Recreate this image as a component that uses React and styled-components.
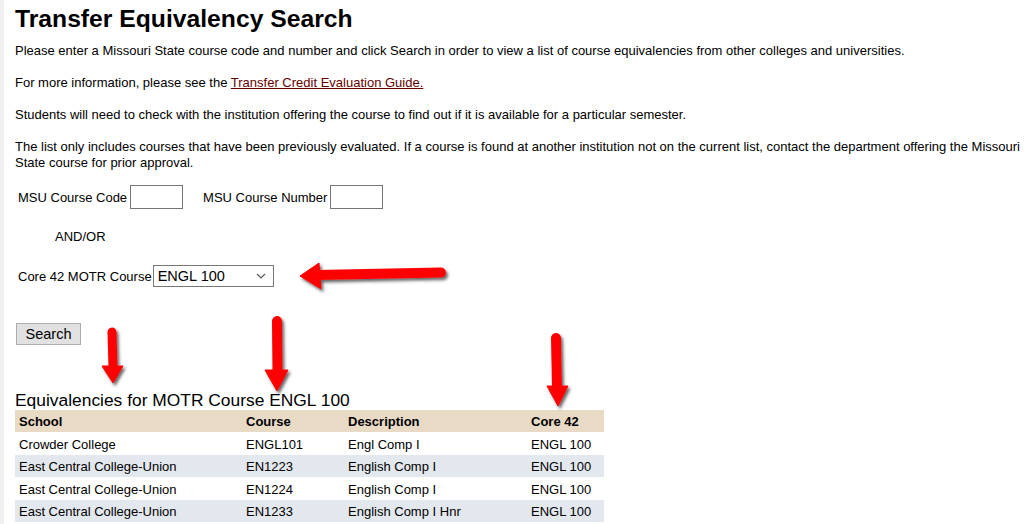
import styled, { createGlobalStyle } from "styled-components"

const GlobalStyle = createGlobalStyle`
    html, body {
        margin: 0;
        padding: 0;
        background-color: #FFFFFF;
    }
    body {
        font-family: "Liberation Sans", Arial, sans-serif;
        color: #000000;
    }
`

const rows = [
    { school: "Crowder College", course: "ENGL101", description: "Engl Comp I", core: "ENGL 100" },
    { school: "East Central College-Union", course: "EN1223", description: "English Comp I", core: "ENGL 100" },
    { school: "East Central College-Union", course: "EN1224", description: "English Comp I", core: "ENGL 100" },
    { school: "East Central College-Union", course: "EN1233", description: "English Comp I Hnr", core: "ENGL 100" },
]

const columns = ["227px", "102px", "183px", "77px"]

export default function App() {
    return (
        <>
            <GlobalStyle />
            <Page>
                <Content>
                    <Title>Transfer Equivalency Search</Title>
                    <Text>Please enter a Missouri State course code and number and click Search in order to view a list of course equivalencies from other colleges and universities.</Text>
                    <Text>For more information, please see the <a href="#guide">Transfer Credit Evaluation Guide.</a></Text>
                    <Text>Students will need to check with the institution offering the course to find out if it is available for a particular semester.</Text>
                    <Text last>The list only includes courses that have been previously evaluated. If a course is found at another institution not on the current list, contact the department offering the Missouri State course for prior approval.</Text>

                    <Form>
                        <FieldRow>
                            <label>MSU Course Code</label>
                            <TextBox />
                            <label className="second">MSU Course Number</label>
                            <TextBox />
                        </FieldRow>
                        <AndOr>AND/OR</AndOr>
                        <SelectRow>
                            <label>Core 42 MOTR Course</label>
                            <Select>
                                <span>ENGL 100</span>
                                <svg width="10" height="6" viewBox="0 0 10 6">
                                    <path d="M1 1 L5 5 L9 1" fill="none" stroke="#555" strokeWidth="1.1" />
                                </svg>
                            </Select>
                        </SelectRow>
                        <SearchButton>Search</SearchButton>
                    </Form>

                    <ResultsTitle>Equivalencies for MOTR Course ENGL 100</ResultsTitle>
                    <Table>
                        <HeadRow>
                            <Cell w={columns[0]}>School</Cell>
                            <Cell w={columns[1]}>Course</Cell>
                            <Cell w={columns[2]}>Description</Cell>
                            <Cell w={columns[3]}>Core 42</Cell>
                        </HeadRow>
                        {rows.map((r, i) => (
                            <Row key={i} alt={i % 2 === 1}>
                                <Cell w={columns[0]}>{r.school}</Cell>
                                <Cell w={columns[1]}>{r.course}</Cell>
                                <Cell w={columns[2]}>{r.description}</Cell>
                                <Cell w={columns[3]}>{r.core}</Cell>
                            </Row>
                        ))}
                    </Table>
                </Content>

                <Arrows width="1030" height="524" viewBox="0 0 1030 524">
                    <defs>
                        <filter id="shadow" x="-30%" y="-30%" width="160%" height="160%">
                            <feDropShadow dx="2" dy="2.5" stdDeviation="1.4" floodColor="#303030" floodOpacity="0.75" />
                        </filter>
                    </defs>
                    <g filter="url(#shadow)" fill="#FF0000" stroke="#FF0000">
                        <line x1="317" y1="275" x2="441" y2="272.5" strokeWidth="10" strokeLinecap="round" />
                        <polygon points="300,276 319,263 321,289" strokeWidth="1" strokeLinejoin="round" />

                        <line x1="112" y1="332" x2="113" y2="368" strokeWidth="9" strokeLinecap="round" />
                        <polygon points="102,366 123,366 113,383" strokeWidth="1" strokeLinejoin="round" />

                        <line x1="277" y1="321" x2="277.5" y2="372" strokeWidth="10" strokeLinecap="round" />
                        <polygon points="265,370 288,370 277,391" strokeWidth="1" strokeLinejoin="round" />

                        <line x1="556" y1="338" x2="557" y2="388" strokeWidth="10" strokeLinecap="round" />
                        <polygon points="547,386 568,386 558,406" strokeWidth="1" strokeLinejoin="round" />
                    </g>
                </Arrows>
            </Page>
        </>
    )
}

const Page = styled.div`
    position: relative;
    width: 1030px;
    height: 524px;
    overflow: hidden;
    border-left: 4px solid #F0F0F0;
    box-sizing: border-box;
`

const Content = styled.div`
    padding: 5px 0 0 11px;
    width: 1015px;
`

const Title = styled.h1`
    margin: 0 0 10px;
    font-size: 24.7px;
    line-height: 28px;
    font-weight: 700;
    white-space: nowrap;
`

const Text = styled.p`
    margin: 0 0 ${props => props.last ? "15px" : "16px"};
    font-size: 13px;
    line-height: 16px;
    a {
        color: #660000;
        text-decoration: underline;
    }
`

const Form = styled.div`
    display: flex;
    flex-direction: column;
    align-items: flex-start;
    font-size: 13px;
    padding-left: 3px;
`

const FieldRow = styled.div`
    display: flex;
    align-items: center;
    height: 24px;
    margin-top: -1px;
    label {
        margin-right: 3px;
    }
    .second {
        margin-left: 20px;
    }
`

const TextBox = styled.div`
    width: 51px;
    height: 22px;
    border: 1px solid #767676;
    background-color: #FFFFFF;
`

const AndOr = styled.div`
    margin: 20px 0 0 37px;
    line-height: 16px;
`

const SelectRow = styled.div`
    display: flex;
    align-items: center;
    margin-top: 20px;
    height: 22px;
    label {
        margin-right: 1px;
    }
`

const Select = styled.div`
    display: flex;
    align-items: center;
    justify-content: space-between;
    box-sizing: border-box;
    width: 121px;
    height: 22px;
    border: 1px solid #767676;
    padding: 0 7px 0 4px;
    font-size: 14.5px;
    background-color: #FFFFFF;
`

const SearchButton = styled.button`
    margin: 36px 0 0 -2px;
    width: 65px;
    height: 22px;
    padding: 0;
    border: 1px solid #ADADAD;
    background-color: #E1E1E1;
    font-family: "Liberation Sans", Arial, sans-serif;
    font-size: 14.5px;
    color: #000000;
`

const ResultsTitle = styled.div`
    margin-top: 45px;
    font-size: 17.4px;
    line-height: 20px;
`

const Table = styled.div`
    width: 589px;
    font-size: 13px;
`

const Row = styled.div`
    display: flex;
    align-items: center;
    box-sizing: border-box;
    height: 22.5px;
    padding-top: 2px;
    background-color: ${props => props.alt ? "#E3E7EE" : "#FFFFFF"};
`

const HeadRow = styled(Row)`
    height: 22px;
    padding-top: 0;
    background-color: #E9DAC6;
    font-weight: 700;
`

const Cell = styled.div`
    width: ${props => props.w};
    padding-left: 4px;
    box-sizing: border-box;
    white-space: nowrap;
`

const Arrows = styled.svg`
    position: absolute;
    top: 0;
    left: -4px;
    pointer-events: none;
`
